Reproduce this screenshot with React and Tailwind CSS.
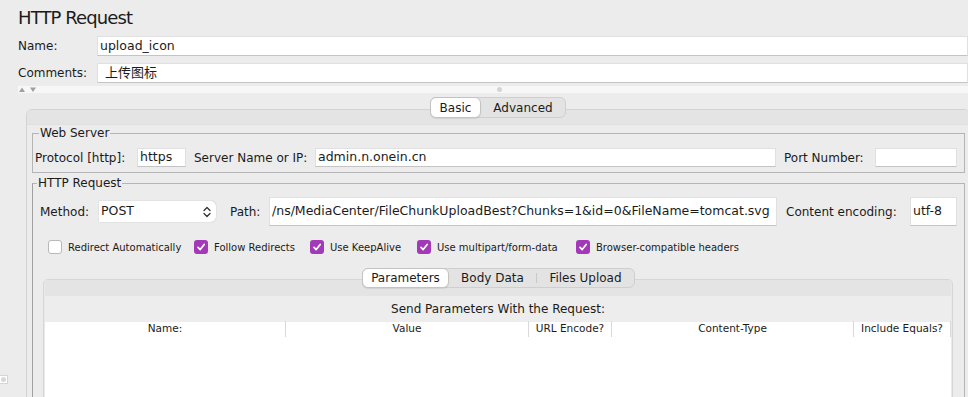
import React from "react"

// small pieces
function Input({ value = "", className = "" }) {
    return (
        <div className={`bg-white border border-[#e0e0e0] border-b-[#c4c4c4] flex items-center whitespace-nowrap overflow-hidden text-[12.5px] text-[#1b1b1b] ${className}`}>
            {value}
        </div>
    )
}

function Check({ checked, label, className = "" }) {
    return (
        <div className={`flex items-center ${className}`}>
            {checked ? (
                <span className="w-[14px] h-[14px] rounded-[3px] bg-[#a23ab7] flex items-center justify-center shrink-0">
                    <svg width="10" height="10" viewBox="0 0 10 10">
                        <path d="M2 5.3 L4.2 7.6 L8.2 2.4" fill="none" stroke="white" strokeWidth="1.7" strokeLinecap="round" strokeLinejoin="round" />
                    </svg>
                </span>
            ) : (
                <span className="w-[14px] h-[14px] rounded-[3px] bg-white border border-[#b9b9b9] shrink-0" />
            )}
            <span className="ml-[6px] text-[10px] text-[#1b1b1b] whitespace-nowrap">{label}</span>
        </div>
    )
}

function Chevrons() {
    return (
        <svg width="10" height="14" viewBox="0 0 10 14">
            <path d="M2 5.5 L5 2.5 L8 5.5" fill="none" stroke="#333" strokeWidth="1.3" strokeLinecap="round" strokeLinejoin="round" />
            <path d="M2 8.5 L5 11.5 L8 8.5" fill="none" stroke="#333" strokeWidth="1.3" strokeLinecap="round" strokeLinejoin="round" />
        </svg>
    )
}

export default function App() {
    return (
        <div className="w-[968px] h-[397px] bg-[#ececec] overflow-hidden relative font-['DejaVu_Sans','Noto_Sans_CJK_SC',sans-serif] text-[#1b1b1b]">

            {/* title + name/comments */}
            <div className="pl-[18px] pt-[7px] h-[36px] text-[18px] leading-[22px] tracking-[-0.9px]">HTTP Request</div>

            <div className="flex items-center h-[20px] pl-[18px]">
                <span className="w-[79px] text-[12px]">Name:</span>
                <Input value="upload_icon" className="flex-1 h-[20px] pl-[2px]" />
            </div>

            <div className="flex items-center h-[20px] pl-[18px] mt-[7px]">
                <span className="w-[79px] text-[12px]">Comments:</span>
                <Input value="上传图标" className="flex-1 h-[20px] pl-[7px] !text-[13px]" />
            </div>

            {/* splitter */}
            <div className="ml-[18px] mt-[3px] h-[7px] bg-[#f7f7f7] flex items-center">
                <svg width="20" height="6" viewBox="0 0 20 6" className="ml-[1px]">
                    <path d="M0 5 L3 0.5 L6 5 Z" fill="#a0a0a0" />
                    <path d="M11 0.5 L17 0.5 L14 5 Z" fill="#a0a0a0" />
                </svg>
                <span className="ml-[458px] w-[5px] h-[5px] rounded-full bg-[#d4d4d4]" />
            </div>

            {/* outer tabbed pane */}
            <div className="ml-[26px] w-[944px]">
                <div className="flex justify-center mt-[4px] relative z-10">
                    <div className="flex h-[21px] rounded-[6px] border border-[#cfcfcf] bg-[#e3e3e3] text-[12px]">
                        <div className="w-[51px] -my-[1px] -ml-[1px] bg-white border border-[#c3c3c3] rounded-[6px] shadow-[0_1px_1px_rgba(0,0,0,0.08)] flex items-center justify-center">Basic</div>
                        <div className="w-[84px] flex items-center justify-center">Advanced</div>
                    </div>
                </div>

                <div className="-mt-[9px] h-[400px] border border-[#d3d3d3] rounded-t-[6px] bg-[#ececec] overflow-hidden">
                    <div className="h-[15px] bg-[#e4e4e4] border-b border-[#e0e0e0]" />

                    <div className="pl-[5px] pr-[4px]">
                        {/* Web Server */}
                        <fieldset className="border border-[#b4b4b4] mt-[1px] pl-[2px] pr-[7px] pt-[7px] pb-[5px]">
                            <legend className="ml-[4px] px-[1px] text-[12px] leading-[15px]">Web Server</legend>
                            <div className="flex items-center h-[19px] text-[12px]">
                                <span className="w-[102px] whitespace-nowrap">Protocol [http]:</span>
                                <Input value="https" className="w-[49px] h-[19px] pl-[2px]" />
                                <span className="ml-[8px] w-[121px] whitespace-nowrap">Server Name or IP:</span>
                                <Input value="admin.n.onein.cn" className="flex-1 h-[19px] pl-[2px]" />
                                <span className="ml-[8px] w-[91px] whitespace-nowrap">Port Number:</span>
                                <Input value="" className="w-[82px] h-[19px]" />
                            </div>
                        </fieldset>

                        {/* HTTP Request */}
                        <fieldset className="border border-[#b4b4b4] border-l-[#a0a0a0] mt-[3px] h-[300px]">
                            <legend className="ml-[4px] px-[1px] text-[12px] leading-[15px]">HTTP Request</legend>

                            <div className="flex items-center h-[29px] mt-[6px] pl-[7px] pr-[7px] text-[12px]">
                                <span className="w-[59px]">Method:</span>
                                <div className="w-[117px] h-[21px] bg-white rounded-r-[5px] shadow-[0_0_1px_rgba(0,0,0,0.35)] flex items-center justify-between pl-[2px] pr-[4px] text-[12.5px]">
                                    POST
                                    <Chevrons />
                                </div>
                                <span className="ml-[14px] w-[39px]">Path:</span>
                                <Input value="/ns/MediaCenter/FileChunkUploadBest?Chunks=1&id=0&FileName=tomcat.svg" className="flex-1 h-[29px] pl-[2px]" />
                                <span className="ml-[9px] w-[124px] whitespace-nowrap">Content encoding:</span>
                                <Input value="utf-8" className="w-[47px] h-[29px] pl-[2px]" />
                            </div>

                            <div className="flex items-center h-[14px] mt-[14px] pl-[15px]">
                                <Check className="w-[146px]" label="Redirect Automatically" />
                                <Check className="w-[116px]" checked label="Follow Redirects" />
                                <Check className="w-[107px]" checked label="Use KeepAlive" />
                                <Check className="w-[159px]" checked label="Use multipart/form-data" />
                                <Check checked label="Browser-compatible headers" />
                            </div>

                            {/* parameters tabs */}
                            <div className="flex justify-center mt-[14px] relative z-10">
                                <div className="flex h-[20px] rounded-[6px] border border-[#cfcfcf] bg-[#e3e3e3] text-[12px]">
                                    <div className="w-[87px] -my-[1px] -ml-[1px] bg-white border border-[#c3c3c3] rounded-[6px] shadow-[0_1px_1px_rgba(0,0,0,0.08)] flex items-center justify-center">Parameters</div>
                                    <div className="w-[87px] flex items-center justify-center">Body Data</div>
                                    <div className="w-px my-[4px] bg-[#c9c9c9]" />
                                    <div className="w-[97px] flex items-center justify-center">Files Upload</div>
                                </div>
                            </div>

                            <div className="-mt-[9px] ml-[10px] mr-[11px] h-[200px] border border-[#d6d6d6] rounded-t-[5px] bg-[#e9e9e9] px-[1px]">
                                <div className="h-[16px] bg-[#e4e4e4]" />
                                <div className="h-[26px] bg-[#ededed] flex items-center justify-center text-[12px]">Send Parameters With the Request:</div>
                                <div className="bg-white h-[160px]">
                                    <div className="flex h-[14px] items-center text-[10.5px]">
                                        <div className="w-[241px] text-center border-r border-[#d9d9d9]">Name:</div>
                                        <div className="w-[243px] text-center border-r border-[#d9d9d9]">Value</div>
                                        <div className="w-[83px] text-center border-r border-[#d9d9d9]">URL Encode?</div>
                                        <div className="w-[242px] text-center border-r border-[#d9d9d9]">Content-Type</div>
                                        <div className="w-[97px] text-center border-r border-[#d9d9d9]">Include Equals?</div>
                                    </div>
                                </div>
                            </div>
                        </fieldset>
                    </div>
                </div>
            </div>

            {/* left split knob */}
            <div className="absolute left-0 top-[375px] w-[8px] h-[9px] bg-white border border-l-0 border-[#d6d6d6] flex items-center justify-center">
                <span className="w-[5px] h-[5px] rounded-full bg-[#d8d8d8]" />
            </div>
        </div>
    )
}
